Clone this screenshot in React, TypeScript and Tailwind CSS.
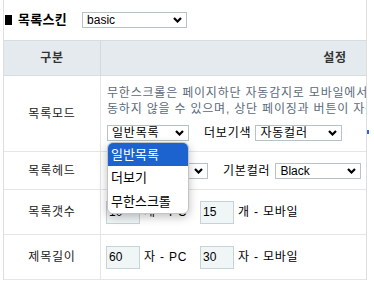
import React from "react";

function Chevron() {
  return (
    <svg
      className="absolute right-[4px] top-1/2 -translate-y-1/2"
      width="9"
      height="6"
      viewBox="0 0 9 6"
    >
      <polyline points="1,1 4.5,4.5 8,1" fill="none" stroke="#000" strokeWidth="2.2" />
    </svg>
  );
}

function Sel({ w, text, className = "" }: { w: string; text: string; className?: string }) {
  return (
    <div
      className={`relative flex h-[16px] shrink-0 items-center border border-[#b5c2c8] bg-white pl-[4px] text-[12px] leading-none text-black ${w} ${className}`}
    >
      <span>{text}</span>
      <Chevron />
    </div>
  );
}

function Inp({ v }: { v: string }) {
  return (
    <div className="flex h-[23px] w-[34px] shrink-0 items-center border border-[#c6d3d8] bg-[#f0f5f6] pl-[2px] text-[12px] leading-none tracking-normal text-black">
      {v}
    </div>
  );
}

export default function App() {
  return (
    <div className="relative h-[307px] w-[374px] bg-white font-['Liberation_Sans','Noto_Sans_CJK_KR',sans-serif] text-[12px] tracking-[0.8px] text-[#222]">
      <div className="ml-[3px] w-[364px] overflow-hidden border-x border-[#dcdfe1]">
        <div className="flex h-[40px] items-center">
          <span className="ml-[1px] inline-block h-[10px] w-[7px] bg-black" />
          <span className="ml-[6px] text-[13px] font-bold tracking-[0.3px] text-black">목록스킨</span>
          <Sel w="w-[105px] tracking-normal" text="basic" className="ml-[15px]" />
        </div>
        <div className="w-[565px]">
          <div className="flex h-[36px] border-y border-[#d5dde1] bg-[#e4eaed] font-bold text-[#333]">
            <div className="flex w-[97px] shrink-0 items-center justify-center border-r border-[#d2dadd]">구분</div>
            <div className="flex w-[468px] shrink-0 items-center justify-center">설정</div>
          </div>
          <div className="flex h-[76px] border-b border-[#e2e6e8]">
            <div className="flex w-[97px] shrink-0 items-center justify-center border-r border-[#e2e6e8]">목록모드</div>
            <div className="flex w-[468px] shrink-0 flex-col justify-center pl-[6px]">
              <div className="whitespace-nowrap leading-[16px] text-[#5b6b7a]">
                무한스크롤은 페이지하단 자동감지로 모바일에서 작
              </div>
              <div className="whitespace-nowrap leading-[16px] text-[#5b6b7a]">
                동하지 않을 수 있으며, 상단 페이징과 버튼이 자동으로 숨겨집니다.
              </div>
              <div className="mt-[7px] flex items-center">
                <div className="relative">
                  <Sel w="w-[82px]" text="일반목록" />
                  <div className="absolute left-0 top-[17px] z-10 w-[82px] overflow-hidden rounded-[6px] border border-[#c4c4c4] bg-white text-[13px] tracking-normal text-black shadow-[0_3px_10px_rgba(0,0,0,0.25)]">
                    <div className="flex h-[23px] items-center bg-[#1c63d0] pl-[3px] text-white">일반목록</div>
                    <div className="flex h-[24px] items-center pl-[3px]">더보기</div>
                    <div className="flex h-[23px] items-center pl-[3px]">무한스크롤</div>
                  </div>
                </div>
                <span className="ml-[15px] whitespace-nowrap text-black">더보기색</span>
                <Sel w="w-[87px]" text="자동컬러" className="ml-[4px]" />
              </div>
            </div>
          </div>
          <div className="flex h-[38px] border-b border-[#e2e6e8]">
            <div className="flex w-[97px] shrink-0 items-center justify-center border-r border-[#e2e6e8]">목록헤드</div>
            <div className="flex w-[468px] shrink-0 items-center pl-[6px]">
              <Sel w="w-[101px]" text="제목" />
              <span className="ml-[15px] whitespace-nowrap text-black">기본컬러</span>
              <Sel w="w-[86px] tracking-normal" text="Black" className="ml-[5px]" />
            </div>
          </div>
          <div className="flex h-[45px] border-b border-[#e2e6e8]">
            <div className="flex w-[97px] shrink-0 items-center justify-center border-r border-[#e2e6e8]">목록갯수</div>
            <div className="flex w-[468px] shrink-0 items-center pl-[5px]">
              <div className="flex w-[94px] shrink-0 items-center">
                <Inp v="10" />
                <span className="ml-[4px] whitespace-nowrap text-black">개 - PC</span>
              </div>
              <Inp v="15" />
              <span className="ml-[4px] whitespace-nowrap text-black">개 - 모바일</span>
            </div>
          </div>
          <div className="flex h-[45px] border-b border-[#e2e6e8]">
            <div className="flex w-[97px] shrink-0 items-center justify-center border-r border-[#e2e6e8]">제목길이</div>
            <div className="flex w-[468px] shrink-0 items-center pl-[5px]">
              <div className="flex w-[94px] shrink-0 items-center">
                <Inp v="60" />
                <span className="ml-[4px] whitespace-nowrap text-black">자 - PC</span>
              </div>
              <Inp v="30" />
              <span className="ml-[4px] whitespace-nowrap text-black">자 - 모바일</span>
            </div>
          </div>
        </div>
      </div>
      <span className="absolute left-[367px] top-[130px] h-[4px] w-[2px] bg-[#2a6ad8]" />
    </div>
  );
}
